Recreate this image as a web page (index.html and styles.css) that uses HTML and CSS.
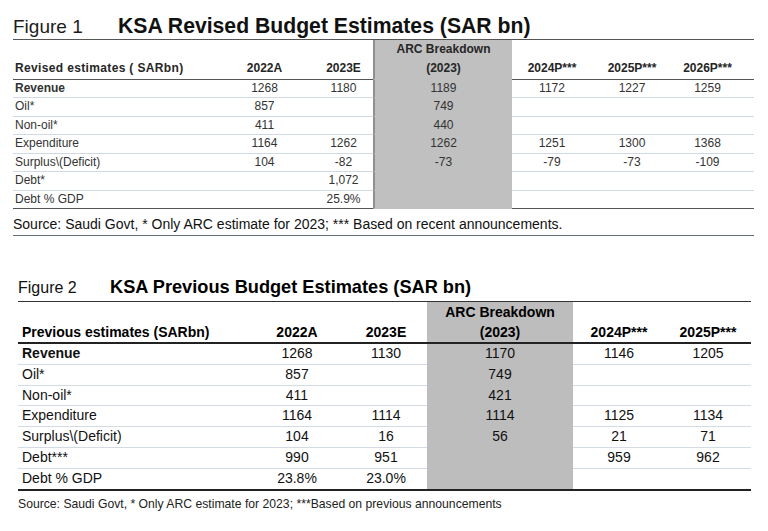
FILE: index.html
```html
<!DOCTYPE html>
<html lang="en">
<head>
<meta charset="utf-8">
<title>KSA Budget Estimates</title>
<link rel="stylesheet" href="styles.css">
</head>
<body>
<section class="fig fig1">
  <div class="fig-title"><span class="fig-num">Figure 1</span><span class="fig-name">KSA Revised Budget Estimates (SAR bn)</span></div>
  <table class="budget">
    <colgroup>
      <col class="c-label"><col class="c-a"><col class="c-b"><col class="c-arc"><col class="c-p1"><col class="c-p2"><col class="c-p3">
    </colgroup>
    <thead>
      <tr><th class="label">Revised estimates ( SARbn)</th><th>2022A</th><th>2023E</th><th class="arc">ARC Breakdown<br>(2023)</th><th>2024P***</th><th>2025P***</th><th class="last">2026P***</th></tr>
    </thead>
    <tbody>
      <tr class="strong"><td class="label">Revenue</td><td>1268</td><td>1180</td><td class="arc">1189</td><td>1172</td><td>1227</td><td class="last">1259</td></tr>
      <tr><td class="label">Oil*</td><td>857</td><td></td><td class="arc">749</td><td></td><td></td><td class="last"></td></tr>
      <tr><td class="label">Non-oil*</td><td>411</td><td></td><td class="arc">440</td><td></td><td></td><td class="last"></td></tr>
      <tr><td class="label">Expenditure</td><td>1164</td><td>1262</td><td class="arc">1262</td><td>1251</td><td>1300</td><td class="last">1368</td></tr>
      <tr><td class="label">Surplus\(Deficit)</td><td>104</td><td>-82</td><td class="arc">-73</td><td>-79</td><td>-73</td><td class="last">-109</td></tr>
      <tr><td class="label">Debt*</td><td></td><td>1,072</td><td class="arc"></td><td></td><td></td><td class="last"></td></tr>
      <tr><td class="label">Debt % GDP</td><td></td><td>25.9%</td><td class="arc"></td><td></td><td></td><td class="last"></td></tr>
    </tbody>
  </table>
  <p class="source">Source: Saudi Govt, * Only ARC estimate for 2023; *** Based on recent announcements.</p>
</section>

<section class="fig fig2">
  <div class="fig-title"><span class="fig-num">Figure 2</span><span class="fig-name">KSA Previous Budget Estimates (SAR bn)</span></div>
  <table class="budget">
    <colgroup>
      <col class="c-label"><col class="c-a"><col class="c-b"><col class="c-arc"><col class="c-p1"><col class="c-p2">
    </colgroup>
    <thead>
      <tr><th class="label">Previous estimates (SARbn)</th><th>2022A</th><th>2023E</th><th class="arc">ARC Breakdown<br>(2023)</th><th>2024P***</th><th>2025P***</th></tr>
    </thead>
    <tbody>
      <tr class="strong"><td class="label">Revenue</td><td>1268</td><td>1130</td><td class="arc">1170</td><td>1146</td><td>1205</td></tr>
      <tr><td class="label">Oil*</td><td>857</td><td></td><td class="arc">749</td><td></td><td></td></tr>
      <tr><td class="label">Non-oil*</td><td>411</td><td></td><td class="arc">421</td><td></td><td></td></tr>
      <tr><td class="label">Expenditure</td><td>1164</td><td>1114</td><td class="arc">1114</td><td>1125</td><td>1134</td></tr>
      <tr><td class="label">Surplus\(Deficit)</td><td>104</td><td>16</td><td class="arc">56</td><td>21</td><td>71</td></tr>
      <tr><td class="label">Debt***</td><td>990</td><td>951</td><td class="arc"></td><td>959</td><td>962</td></tr>
      <tr><td class="label">Debt % GDP</td><td>23.8%</td><td>23.0%</td><td class="arc"></td><td></td><td></td></tr>
    </tbody>
  </table>
  <p class="source">Source: Saudi Govt, * Only ARC estimate for 2023; ***Based on previous announcements</p>
</section>
</body>
</html>
```

FILE: styles.css
```css
html, body {
  margin: 0;
  padding: 0;
  background: #ffffff;
}

body {
  font-family: "Liberation Sans", Arial, sans-serif;
  color: #111;
}

.fig-title {
  display: flex;
  align-items: baseline;
  box-sizing: border-box;
}

.fig-num,
.fig-name {
  line-height: 1;
  white-space: nowrap;
}

.fig-name {
  font-weight: bold;
}

.budget {
  table-layout: fixed;
  border-collapse: separate;
  border-spacing: 0;
}

.budget th,
.budget td {
  padding: 0;
  text-align: center;
  white-space: nowrap;
}

.budget th {
  font-weight: bold;
  vertical-align: bottom;
}

.budget .label {
  text-align: left;
}

.budget .strong td {
  font-weight: normal;
}

.budget .strong .label {
  font-weight: bold;
}

.source {
  margin: 0;
  white-space: nowrap;
}

/* ---------- Figure 1 ---------- */
.fig1 {
  margin-left: 13px;
  width: 741px;
}

.fig1 .fig-title {
  height: 40px;
  padding-top: 14.5px;
  border-bottom: 1.5px solid #555;
}

.fig1 .fig-num {
  width: 105px;
  font-size: 19px;
  color: #1c1c1c;
}

.fig1 .fig-name {
  font-size: 21.2px;
  color: #111;
}

.fig1 .budget {
  width: 741px;
  font-size: 12px;
  color: #333;
}

.fig1 .c-label { width: 202px; }
.fig1 .c-a { width: 99px; }
.fig1 .c-b { width: 59px; }
.fig1 .c-arc { width: 139px; }
.fig1 .c-p1 { width: 80px; }
.fig1 .c-p2 { width: 80px; }
.fig1 .c-p3 { width: 82px; }

.fig1 .budget th {
  line-height: 19.25px;
  border-bottom: 1.5px solid #555;
  color: #262626;
}

.fig1 .budget th.label {
  letter-spacing: 0.35px;
}

.fig1 .budget .label {
  padding-left: 2px;
}

.fig1 .budget td {
  line-height: 17.5px;
  border-bottom: 1px solid #cfdae6;
}

.fig1 .budget tbody tr:last-child td {
  border-bottom: 1.5px solid #555;
}

.fig1 .budget .last {
  padding-right: 11px;
}

.fig1 .budget .arc,
.fig1 .budget tbody tr:last-child td.arc {
  background: #c0c0c0;
  border-bottom-color: #c0c0c0;
  border-left: 2px solid #8f8f8f;
}

.fig1 .source {
  margin-top: 7px;
  padding-bottom: 3px;
  font-size: 14px;
  line-height: 16px;
  color: #111;
  border-bottom: 1.5px solid #5f6f80;
}

/* ---------- Figure 2 ---------- */
.fig2 {
  margin-left: 18px;
  margin-top: 24.5px;
  width: 733px;
}

.fig2 .fig-title {
  height: 41px;
  padding-top: 17.8px;
  border-bottom: 1.5px solid #333;
}

.fig2 .fig-num {
  width: 92px;
  font-size: 16px;
  color: #111;
}

.fig2 .fig-name {
  font-size: 18.2px;
  color: #000;
}

.fig2 .budget {
  width: 733px;
  font-size: 14px;
  color: #111;
}

.fig2 .c-label { width: 231px; }
.fig2 .c-a { width: 96px; }
.fig2 .c-b { width: 82px; }
.fig2 .c-arc { width: 146px; }
.fig2 .c-p1 { width: 92px; }
.fig2 .c-p2 { width: 86px; }

.fig2 .budget th {
  line-height: 20.25px;
  border-bottom: 2px solid #222;
  color: #000;
}

.fig2 .budget .label {
  padding-left: 4px;
}

.fig2 .budget td {
  line-height: 19.8px;
  border-bottom: 1px solid #d3dbe4;
}

.fig2 .budget tbody tr:last-child td {
  border-bottom: 2px solid #222;
}

.fig2 .budget .arc {
  background: #bdbdbd;
}

.fig2 .budget td.arc {
  border-bottom-color: #bdbdbd;
}

.fig2 .budget tbody tr:last-child td.arc {
  border-bottom-color: #222;
}

.fig2 .source {
  margin-top: 6px;
  font-size: 12.2px;
  line-height: 14px;
  color: #222;
}
```
